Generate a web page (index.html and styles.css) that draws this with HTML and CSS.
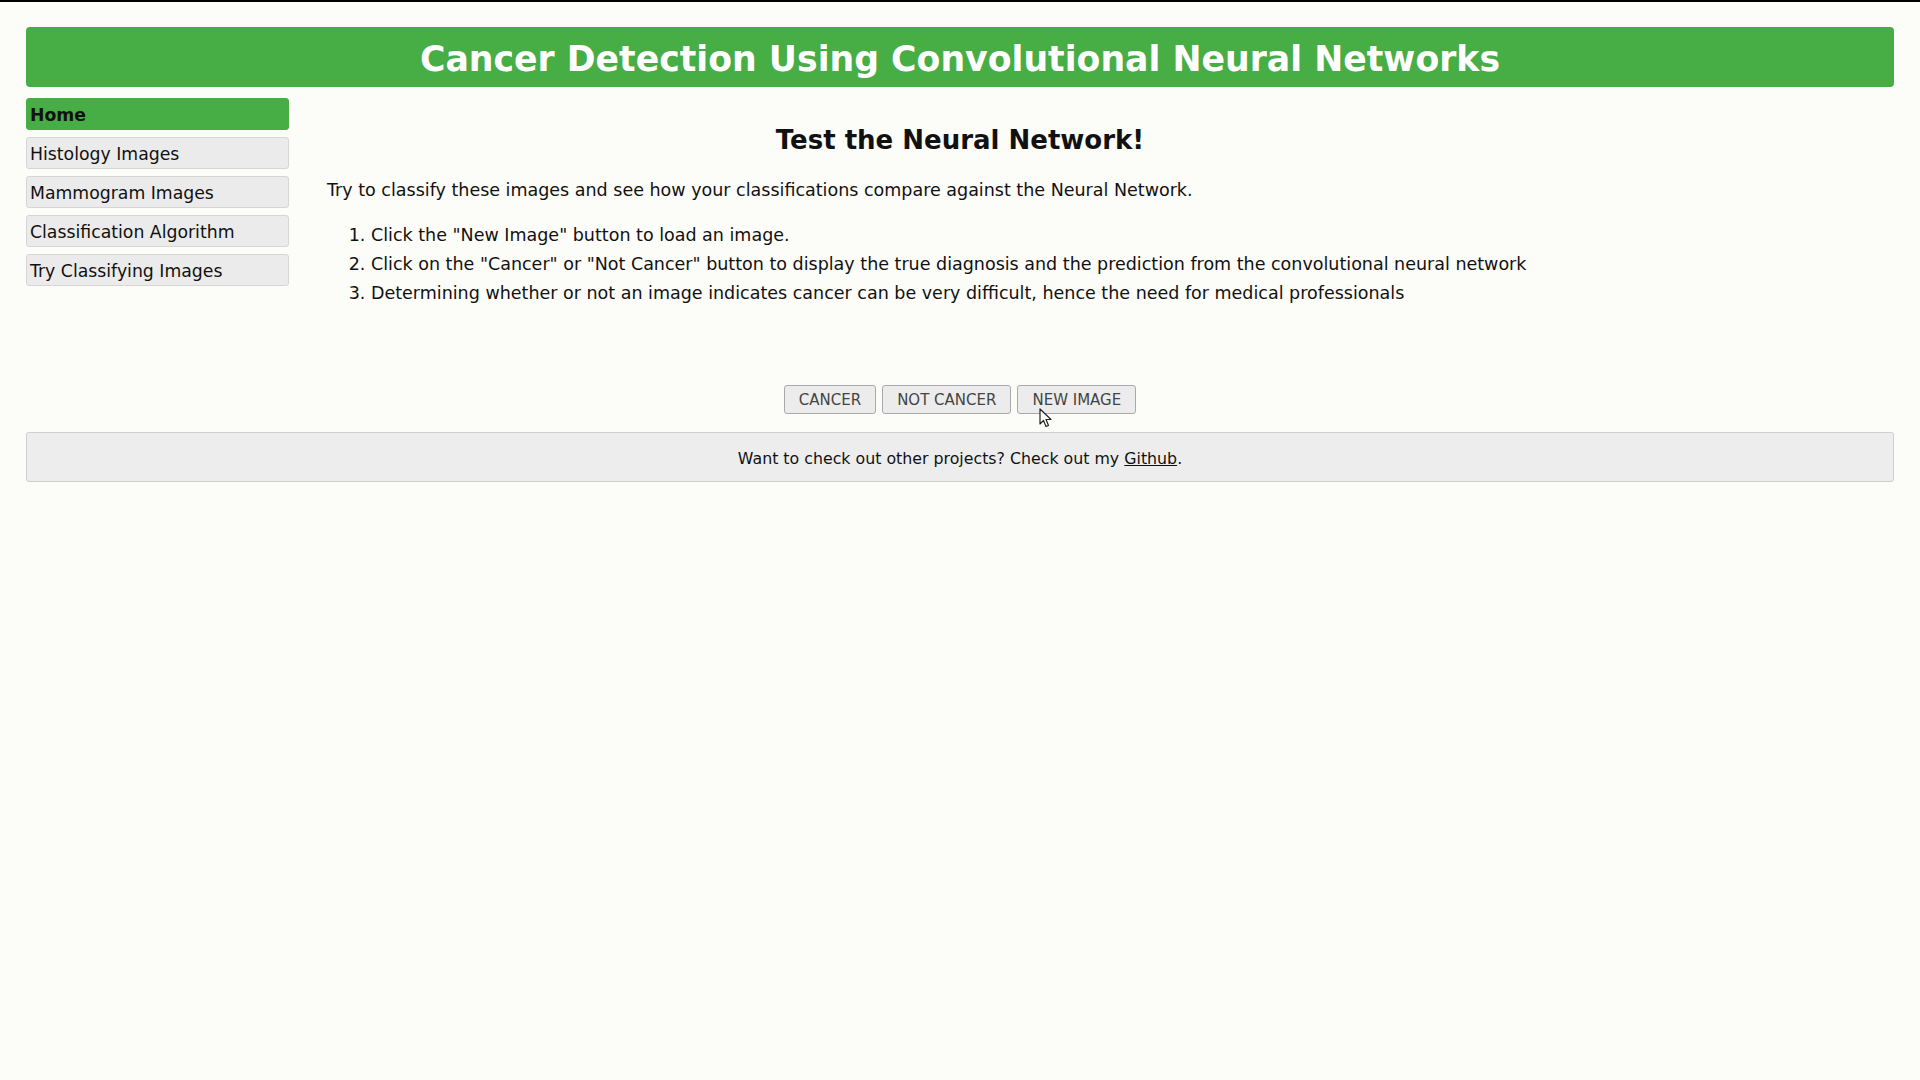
FILE: index.html
```html
<!DOCTYPE html>
<html lang="en">
<head>
  <meta charset="UTF-8">
  <meta name="viewport" content="width=device-width, initial-scale=1.0">
  <title>Cancer Detection Using Convolutional Neural Networks</title>
  <link rel="stylesheet" href="styles.css">
</head>
<body>
  <div class="page">
    <!-- Banner -->
    <header class="banner">
      <h1>Cancer Detection Using Convolutional Neural Networks</h1>
    </header>

    <div class="layout">
      <!-- Side navigation -->
      <nav class="sidebar">
        <a href="#" class="nav-item active">Home</a>
        <a href="#" class="nav-item">Histology Images</a>
        <a href="#" class="nav-item">Mammogram Images</a>
        <a href="#" class="nav-item">Classification Algorithm</a>
        <a href="#" class="nav-item">Try Classifying Images</a>
      </nav>

      <!-- Main content -->
      <main class="content">
        <h2>Test the Neural Network!</h2>
        <p class="intro">Try to classify these images and see how your classifications compare against the Neural Network.</p>
        <ol class="steps">
          <li>Click the "New Image" button to load an image.</li>
          <li>Click on the "Cancer" or "Not Cancer" button to display the true diagnosis and the prediction from the convolutional neural network</li>
          <li>Determining whether or not an image indicates cancer can be very difficult, hence the need for medical professionals</li>
        </ol>

        <div class="controls">
          <button class="btn">Cancer</button>
          <button class="btn">Not Cancer</button>
          <button class="btn">New Image</button>
          <svg class="cursor" width="14" height="20" viewBox="0 0 14 20">
            <path d="M1 1 L1 16 L4.5 12.5 L7 18.5 L9.5 17.5 L7 11.5 L12 11.5 Z" fill="#fff" stroke="#222" stroke-width="1.2" stroke-linejoin="round"/>
          </svg>
        </div>
      </main>
    </div>

    <footer class="footer">
      Want to check out other projects? Check out my <a href="#">Github</a>.
    </footer>
  </div>
</body>
</html>
```

FILE: styles.css
```css
* {
  box-sizing: border-box;
  margin: 0;
  padding: 0;
}

body {
  font-family: "DejaVu Sans", Verdana, sans-serif;
  background-color: #fcfcf8;
  color: #111;
  border-top: 2px solid #000;
  min-height: 100vh;
}

.page {
  padding: 25px 26px 0;
}

.banner {
  background: #47ad45;
  border-radius: 4px;
  height: 60px;
  padding-top: 4px;
  display: flex;
  align-items: center;
  justify-content: center;
}

.banner h1 {
  color: #fff;
  font-size: 34.7px;
  font-weight: bold;
}

.layout {
  display: grid;
  grid-template-columns: 263px 1fr 263px;
  margin-top: 11px;
}

.sidebar {
  display: flex;
  flex-direction: column;
  gap: 7px;
}

.nav-item {
  display: block;
  height: 32px;
  line-height: 32px;
  padding-left: 3px;
  font-size: 17.3px;
  color: #111;
  text-decoration: none;
  background: #ebebeb;
  border: 1px solid #d6d6d6;
  border-radius: 3px;
}

.nav-item.active {
  background: #47ad45;
  border-color: #47ad45;
  font-weight: bold;
}

.content {
  padding: 0 0 0 38px;
}

.content h2 {
  text-align: center;
  font-size: 26px;
  line-height: 30px;
  margin-top: 27px;
  padding-right: 38px;
}

.intro {
  font-size: 17.5px;
  line-height: 22px;
  margin-top: 24px;
}

.steps {
  margin-top: 20px;
  padding-left: 44px;
  font-size: 17.5px;
  line-height: 29px;
}

.controls {
  position: relative;
  display: flex;
  justify-content: center;
  gap: 6px;
  margin-top: 77px;
  padding-right: 38px;
}

.btn {
  height: 29px;
  padding: 0 14px;
  font-family: "DejaVu Sans", Verdana, sans-serif;
  font-size: 15px;
  text-transform: uppercase;
  color: #444;
  background: #ececec;
  border: 1px solid #a9a9a9;
  border-radius: 3px;
  cursor: pointer;
}

.cursor {
  position: absolute;
  left: 712px;
  top: 23px;
}

.footer {
  margin-top: 18px;
  height: 50px;
  line-height: 51px;
  text-align: center;
  font-size: 15.8px;
  background: #ededed;
  border: 1px solid #cfcfcf;
  border-radius: 3px;
}

.footer a {
  color: #111;
}
```
